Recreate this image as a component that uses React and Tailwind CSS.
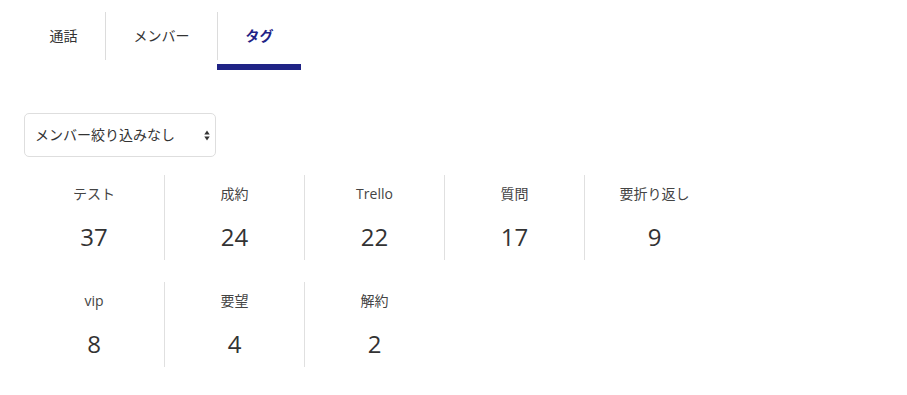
import { useState } from 'react';

const tabs = ['通話', 'メンバー', 'タグ'];

const tagCounts = [
    { name: 'テスト', count: 37 },
    { name: '成約', count: 24 },
    { name: 'Trello', count: 22 },
    { name: '質問', count: 17 },
    { name: '要折り返し', count: 9 },
    { name: 'vip', count: 8 },
    { name: '要望', count: 4 },
    { name: '解約', count: 2 },
];

function App() {
    const [activeTab, setActiveTab] = useState(2);

    return (
        <div className="min-h-[395px] bg-white text-[#333] font-['Open_Sans','Noto_Sans_CJK_JP',sans-serif]">
            {/* Tabs */}
            <div className="flex pl-[22px] pt-3">
                {tabs.map((tab, i) => {
                    const active = i === activeTab;
                    return (
                        <div key={tab} className="flex flex-col">
                            <button
                                onClick={() => setActiveTab(i)}
                                className={`h-12 px-[27.5px] text-sm ${i > 0 ? 'border-l border-[#dcdcdc]' : ''} ${active ? 'font-bold text-[#1f2385]' : 'text-[#333]'}`}
                            >
                                {tab}
                            </button>
                            <div className={`mt-1 h-1.5 ${active ? 'bg-[#1f2385]' : ''}`}></div>
                        </div>
                    );
                })}
            </div>

            {/* Member filter */}
            <div className="ml-6 mt-[43px] flex h-11 w-48 items-center justify-between rounded-[5px] border border-[#dedede] pl-2.5 pr-[5px]">
                <span className="text-sm text-[#333]">メンバー絞り込みなし</span>
                <svg width="6" height="11" viewBox="0 0 6 11" className="text-[#333]">
                    <path d="M3 0.5 L5.7 4.5 L0.3 4.5 Z" fill="currentColor" />
                    <path d="M3 10.5 L5.7 6.5 L0.3 6.5 Z" fill="currentColor" />
                </svg>
            </div>

            {/* Tag counts */}
            <div className="ml-6 mt-[18px] grid w-[700px] grid-cols-5 gap-y-[22px]">
                {tagCounts.map((tag, i) => (
                    <div
                        key={tag.name}
                        className={`flex h-[85px] flex-col items-center pt-[9px] ${i % 5 !== 0 ? 'border-l border-[#e0e0e0]' : ''}`}
                    >
                        <div className="text-sm leading-5 text-[#444]">{tag.name}</div>
                        <div className="mt-[17px] text-2xl leading-8 text-[#333]">{tag.count}</div>
                    </div>
                ))}
            </div>
        </div>
    );
}

export default App;
